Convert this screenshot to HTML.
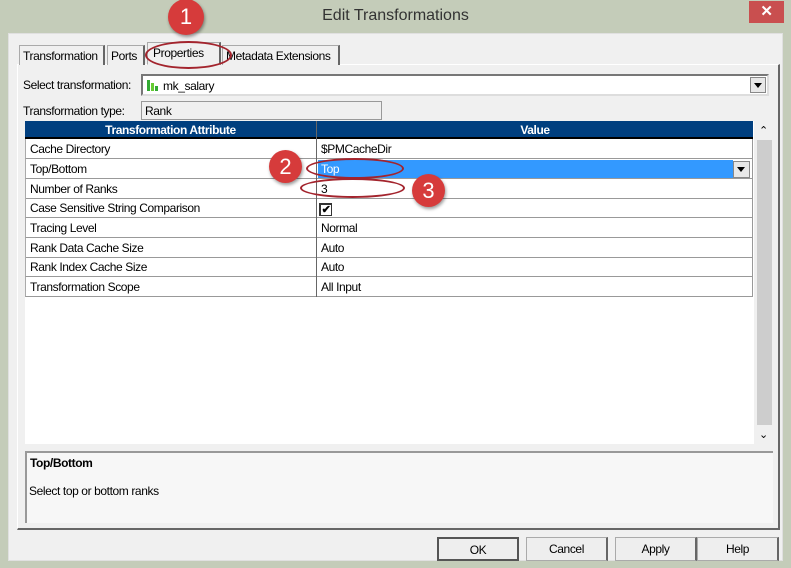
<!DOCTYPE html>
<html><head><style>
*{box-sizing:border-box;margin:0;padding:0}
body{width:791px;height:568px;background:#c4ccb9;font-family:"Liberation Sans",Arial,sans-serif;font-size:12px;color:#000;position:relative;overflow:hidden;letter-spacing:-0.4px}
.a{position:absolute}
.title{left:0;top:7px;width:791px;text-align:center;font-size:16px;color:#333;letter-spacing:0}
.close{left:749px;top:1px;width:35px;height:22px;background:#c94f4f;color:#fff;text-align:center;font-size:15px;line-height:22px;font-weight:bold}
.win{left:8px;top:33px;width:775px;height:528px;background:#f0f0f0;border:1px solid #e0e0e0}
.tab{top:45px;height:20px;border:1px solid #aaa;border-bottom:none;border-right:2px solid #666;background:#f0f0f0;padding:3px 3px;white-space:nowrap}
.panel{left:17px;top:64px;width:763px;height:466px;border:1px solid #fff;border-right:2px solid #666;border-bottom:2px solid #666}
.combo{left:141px;top:74px;width:628px;height:22px;background:#fff;border:2px solid #777;border-right-color:#ddd;border-bottom-color:#ddd}
.dd{width:16px;height:16px;background:#e8e8e8;border:1px solid #888;}
.dd:after{content:"";position:absolute;left:3px;top:5px;border-left:4px solid transparent;border-right:4px solid transparent;border-top:5px solid #000}
.grid{left:25px;top:121px;width:729px;height:323px;background:#fff}
.hdr{top:121px;height:18px;background:#003f7f;color:#fff;font-weight:bold;text-align:center;line-height:18px;border-bottom:2px solid #000}
.row{left:25px;width:728px;height:20px;border-bottom:1px solid #999;border-left:1px solid #aaa;border-right:1px solid #999}
.row span{position:absolute;top:3px}
.c1{left:4px}.c2{left:295px}
.vl{left:316px;top:121px;width:1px;height:176px;background:#666}
.sb{left:755px;top:121px;width:18px;height:323px;background:#f0f0f0}
.thumb{left:757px;top:140px;width:15px;height:285px;background:#cdcdcd}
.desc{left:25px;top:451px;width:748px;height:72px;background:#f7f7f7;border-top:2px solid #999;border-left:2px solid #999}
.btn{top:537px;height:24px;border:1px solid #aaa;border-right:2px solid #666;background:#eee;text-align:center;line-height:22px}
.circ{width:36px;height:36px;border-radius:50%;background:#d63b3b;color:#fff;text-align:center;font-size:22px;line-height:36px;box-shadow:1px 2px 3px rgba(0,0,0,.4);letter-spacing:0}
.ell{border:2px solid #a3242d;border-radius:50%}
</style></head><body>
<div class="a title">Edit Transformations</div>
<div class="a close">✕</div>
<div class="a win"></div>
<div class="a panel"></div>
<div class="a tab" style="left:19px;width:86px">Transformation</div>
<div class="a tab" style="left:107px;width:38px">Ports</div>
<div class="a tab" style="left:147px;top:42px;height:23px;width:74px;border-bottom:1px solid #f0f0f0;padding-left:5px">Properties</div>
<div class="a tab" style="left:222px;width:118px">Metadata Extensions</div>
<div class="a" style="left:23px;top:78px">Select transformation:</div>
<div class="a combo"><svg class="a" style="left:3px;top:2px" width="14" height="14"><rect x="1" y="2" width="3" height="11" fill="#3a3"/><rect x="5" y="5" width="3" height="8" fill="#6c3"/><rect x="9" y="8" width="3" height="5" fill="#3a3"/></svg><span class="a" style="left:20px;top:3px">mk_salary</span><div class="a dd" style="right:1px;top:1px"></div></div>
<div class="a" style="left:23px;top:104px">Transformation type:</div>
<div class="a" style="left:141px;top:101px;width:241px;height:19px;border:1px solid #999;background:#f0f0f0;padding:2px 3px">Rank</div>
<div class="a grid"></div>
<div class="a hdr" style="left:25px;width:291px">Transformation Attribute</div>
<div class="a hdr" style="left:317px;width:436px">Value</div>
<div class="a row" style="top:139px"><span class="c1">Cache Directory</span><span class="c2">$PMCacheDir</span></div>
<div class="a row" style="top:159px"><span class="c1">Top/Bottom</span></div>
<div class="a" style="left:318px;top:160px;width:415px;height:18px;background:#3399ff;color:#fff;padding:2px 3px">Top</div>
<div class="a dd" style="left:733px;top:161px;width:17px;height:17px"></div>
<div class="a row" style="top:179px"><span class="c1">Number of Ranks</span><span class="c2">3</span></div>
<div class="a row" style="top:198px"><span class="c1">Case Sensitive String Comparison</span></div>
<div class="a" style="left:319px;top:203px;width:13px;height:13px;border:1px solid #333;border-top-width:2px;border-left-width:2px;font-size:11px;line-height:10px;font-weight:bold;text-align:center">✔</div>
<div class="a row" style="top:218px"><span class="c1">Tracing Level</span><span class="c2">Normal</span></div>
<div class="a row" style="top:238px"><span class="c1">Rank Data Cache Size</span><span class="c2">Auto</span></div>
<div class="a row" style="top:257px"><span class="c1">Rank Index Cache Size</span><span class="c2">Auto</span></div>
<div class="a row" style="top:277px"><span class="c1">Transformation Scope</span><span class="c2">All Input</span></div>
<div class="a vl"></div>
<div class="a sb"></div>
<div class="a thumb"></div>
<div class="a" style="left:759px;top:124px;font-size:11px">&#8963;</div>
<div class="a" style="left:759px;top:428px;font-size:11px">&#8964;</div>
<div class="a desc"><b class="a" style="left:3px;top:3px">Top/Bottom</b><span class="a" style="left:2px;top:31px">Select top or bottom ranks</span></div>
<div class="a btn" style="left:437px;width:82px;border:2px solid #555">OK</div>
<div class="a btn" style="left:526px;width:82px">Cancel</div>
<div class="a btn" style="left:615px;width:82px">Apply</div>
<div class="a btn" style="left:697px;width:82px">Help</div>
<div class="a ell" style="left:145px;top:41px;width:87px;height:28px"></div>
<div class="a ell" style="left:306px;top:158px;width:98px;height:21px"></div>
<div class="a ell" style="left:300px;top:178px;width:105px;height:20px"></div>
<div class="a circ" style="left:168px;top:-1px">1</div>
<div class="a circ" style="left:269px;top:150px;width:33px;height:33px;line-height:33px">2</div>
<div class="a circ" style="left:412px;top:174px;width:33px;height:33px;line-height:33px">3</div>
</body></html>
